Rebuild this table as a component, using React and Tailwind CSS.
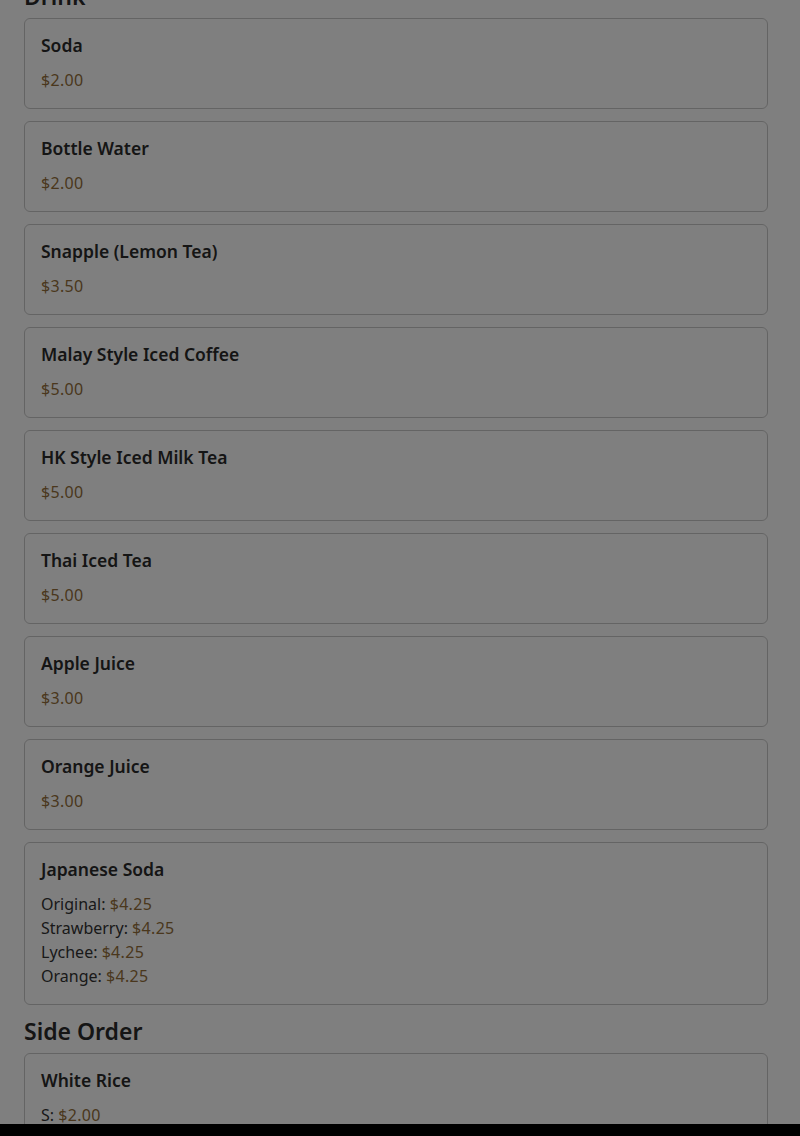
const drinks = [
  { name: 'Soda', prices: [{ price: '$2.00' }] },
  { name: 'Bottle Water', prices: [{ price: '$2.00' }] },
  { name: 'Snapple (Lemon Tea)', prices: [{ price: '$3.50' }] },
  { name: 'Malay Style Iced Coffee', prices: [{ price: '$5.00' }] },
  { name: 'HK Style Iced Milk Tea', prices: [{ price: '$5.00' }] },
  { name: 'Thai Iced Tea', prices: [{ price: '$5.00' }] },
  { name: 'Apple Juice', prices: [{ price: '$3.00' }] },
  { name: 'Orange Juice', prices: [{ price: '$3.00' }] },
  {
    name: 'Japanese Soda',
    prices: [
      { label: 'Original', price: '$4.25' },
      { label: 'Strawberry', price: '$4.25' },
      { label: 'Lychee', price: '$4.25' },
      { label: 'Orange', price: '$4.25' },
    ],
  },
]

const sides = [
  { name: 'White Rice', prices: [{ label: 'S', price: '$2.00' }, { label: 'L', price: '$3.00' }] },
]

function MenuItem({ item }) {
  return (
    <div className="border border-[#c9c9c9] rounded-md p-4 bg-white">
      <div className="text-[17.5px] leading-[20px] font-semibold text-[#2a2a2a] mb-[13px]">{item.name}</div>
      {item.prices.map((p, i) => (
        <div key={i} className="text-[16px] leading-[24px] text-[#333]">
          {p.label && <span>{p.label}: </span>}
          <span className="text-[#946f3a] tracking-[0.02em]">{p.price}</span>
        </div>
      ))}
    </div>
  )
}

function Section({ title, items }) {
  return (
    <div>
      <h2 className="text-[23px] leading-[32px] font-semibold text-[#2a2a2a] mt-[10px] mb-[6px]">{title}</h2>
      <div className="flex flex-col gap-3">
        {items.map((item) => (
          <MenuItem key={item.name} item={item} />
        ))}
      </div>
    </div>
  )
}

export default function App() {
  return (
    <div className="h-[1136px] overflow-hidden bg-white font-['Noto_Sans','Lato',sans-serif]">
      <div className="pl-6 pr-8 -mt-[30px]">
        <Section title="Drink" items={drinks} />
        <Section title="Side Order" items={sides} />
      </div>

      {/* modal backdrop */}
      <div className="fixed inset-0 bg-black/50" />
      <div className="fixed left-0 right-0 bottom-0 h-3 bg-black" />
    </div>
  )
}
